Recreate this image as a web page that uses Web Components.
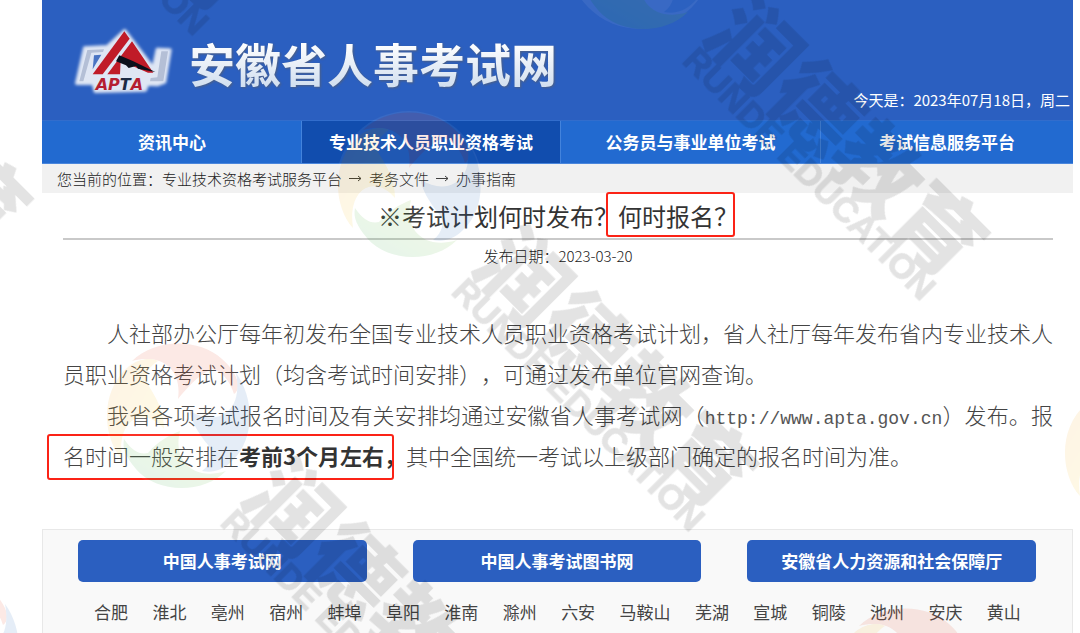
<!DOCTYPE html>
<html lang="zh-CN">
<head>
<meta charset="utf-8">
<title>安徽省人事考试网</title>
<style>
body { margin: 0; background: #fff; font-family: "Liberation Sans", "Noto Sans CJK SC", sans-serif; }
</style>
</head>
<body>
<exam-page></exam-page>

<script>
const define = (name, html) => {
  const template = document.createElement('template');
  template.innerHTML = html;
  customElements.define(name, class extends HTMLElement {
    constructor() {
      super();
      this.attachShadow({ mode: 'open' }).append(template.content.cloneNode(true));
    }
  });
};

define('apta-logo', `
<style>
  :host { display: block; }
  svg { display: block; width: 110px; height: 85px; }
</style>
<svg viewBox="0 0 330 255" role="img" aria-label="APTA">
  <defs><filter id="glow" x="-20%" y="-20%" width="140%" height="140%"><feGaussianBlur stdDeviation="4"/></filter></defs>
  <g filter="url(#glow)" fill="#dfe6f4" stroke="#dfe6f4" stroke-width="10" stroke-linejoin="round">
    <path d="M164 32 L250 145 L262 88 L300 90 L284 186 L262 194 L232 192 L226 210 L76 214 L70 190 L20 190 L44 84 L112 80 Z"/>
  </g>
  <path d="M52 90 L102 88 L99 96 L64 98 L40 184 L28 184 Z" fill="#b4bfd6"/>
  <path d="M72 106 L94 104 L68 148 Z" fill="#4a74c3"/>
  <path d="M274 94 L294 94 L280 184 L240 184 L242 174 L262 172 Z" fill="#b4bfd6"/>
  <path d="M163 34 L179 56 L98 163 L68 163 Z" fill="#c01b28"/>
  <path d="M186 64 L250 158 L234 158 L152 122 L150 163 L112 163 Z" fill="#c01b28"/>
  <path d="M148 106 L190 124 L256 156 L204 146 L198 138 L176 144 L168 136 L138 124 Z" fill="#0b101c"/>
  <text x="77" y="211" font-family="DejaVu Sans" font-weight="700" font-style="italic" font-size="48" fill="#b51d31">AP<tspan fill="#1b2a44">T</tspan>A</text>
</svg>`);

define('site-header', `
<style>
  :host { display: flex; height: 120px; background: #2b5fc0; color: #fff; }
  apta-logo { margin: 20px 0 0 28px; }
  h1 { margin: 0 0 0 9px; flex: 1; font-size: 46px; line-height: 60px; padding-top: 32px; font-weight: 700;
       font-family: "Noto Sans CJK SC", sans-serif; white-space: nowrap; }
  h1 span { background: linear-gradient(#fff 20%, #d3e0f0 85%); background-clip: text; color: transparent;
       filter: drop-shadow(1px 1px 1px #4d5f82); }
  p { margin: 0; align-self: flex-end; padding: 0 3px 9px 0; font: 15px/22px "Noto Sans CJK SC", sans-serif; white-space: nowrap; }
</style>
<apta-logo></apta-logo>
<h1><span>安徽省人事考试网</span></h1>
<p>今天是：2023年07月18日，周二</p>`);

define('site-nav', `
<style>
  :host { display: block; background: #226ad0; border-top: 1px solid #326dcc; border-bottom: 1px solid #4a86dc; }
  nav { display: grid; grid-template-columns: 259fr 259fr 260fr 253fr; }
  a { color: #fff; text-decoration: none; text-align: center; font: 700 17px/42px "Noto Sans CJK SC", sans-serif;
      border-left: 1px solid #4383dc; white-space: nowrap; }
  a:first-child { border-left-color: transparent; }
  a[aria-current] { background: #114dae; }
</style>
<nav>
  <a href="#news">资讯中心</a><a href="#pro" aria-current="page">专业技术人员职业资格考试</a><a href="#civil">公务员与事业单位考试</a><a href="#service">考试信息服务平台</a>
</nav>`);

define('bread-crumb', `
<style>
  :host { display: block; background: #f1f1f1; padding-left: 15px; font: 300 15px/29px "Noto Sans CJK SC", sans-serif; color: #222; }
  nav { display: flex; gap: 7px; white-space: nowrap; }
  a { color: inherit; text-decoration: none; }
  svg { width: 13px; height: 29px; }
</style>
<nav>
  <span>您当前的位置：<a href="#pro">专业技术资格考试服务平台</a></span>
  <svg viewBox="0 0 13 29" aria-hidden="true"><path d="M0 14.5H12M9 12L12 14.5L9 17" fill="none" stroke="#333"/></svg>
  <a href="#files">考务文件</a>
  <svg viewBox="0 0 13 29" aria-hidden="true"><path d="M0 14.5H12M9 12L12 14.5L9 17" fill="none" stroke="#333"/></svg>
  <a href="#guide">办事指南</a>
</nav>`);

define('red-mark', `
<style>
  :host { display: inline-block; position: relative; text-indent: 0; white-space: nowrap; }
  i { position: absolute; inset: var(--mark-inset); border: 2px solid #fb2316; border-radius: 3px; }
</style>
<slot></slot><i></i>`);

define('article-body', `
<style>
  :host { display: block; padding: 0 20px 0 21px; font-family: "Noto Sans CJK SC", sans-serif; text-spacing-trim: space-all; }
  h2 { margin: 0; font-weight: 400; font-size: 24px; line-height: 45px; text-align: center; color: #333;
       border-bottom: 2px solid #c9c9c9; }
  h2 red-mark { --mark-inset: -1px 3px 1px -12px; }
  .date { margin: 0; text-align: center; font-size: 15px; line-height: 32px; font-weight: 300; color: #222; }
  .text { padding: 40px 0 53px; font-weight: 300; font-size: 22px; line-height: 41px; color: #444; }
  .text p { margin: 0; text-indent: 44px; text-align: justify; }
  .text red-mark { --mark-inset: -1px 12px -4px -16px; }
  .url { font: 18px/20px "Liberation Mono", monospace; color: #555; }
  b { font-weight: 700; color: #333; }
</style>
<h2>※考试计划何时发布？<red-mark>何时报名？</red-mark></h2>
<p class="date">发布日期：2023-03-20</p>
<div class="text">
  <p>人社部办公厅每年初发布全国专业技术人员职业资格考试计划，省人社厅每年发布省内专业技术人员职业资格考试计划（均含考试时间安排），可通过发布单位官网查询。</p>
  <p>我省各项考试报名时间及有关安排均通过安徽省人事考试网（<span class="url">http://www.apta.gov.cn</span>）发布。报<red-mark>名时间一般安排在<b>考前3个月左右，</b></red-mark>其中全国统一考试以上级部门确定的报名时间为准。</p>
</div>`);

define('site-footer', `
<style>
  :host { display: block; background: #f9f9f9; border: 1px solid #e8e8e8; border-bottom: 0; padding-top: 10px;
          font-family: "Noto Sans CJK SC", sans-serif; }
  a { text-decoration: none; white-space: nowrap; }
  .sites { display: grid; grid-template-columns: repeat(3, 1fr); gap: 46px; padding: 0 36px 0 35px; }
  .sites a { background: #2b5fc0; color: #fff; text-align: center; border-radius: 5px; font-size: 17px; line-height: 42px; font-weight: 700; }
  .cities { display: flex; justify-content: space-between; padding: 15px 51px 6px; }
  .cities a { color: #444; font-size: 17px; line-height: 30px; }
</style>
<div class="sites"><a href="#cpta">中国人事考试网</a><a href="#books">中国人事考试图书网</a><a href="#hrss">安徽省人力资源和社会保障厅</a></div>
<nav class="cities">
  ${'合肥 淮北 亳州 宿州 蚌埠 阜阳 淮南 滁州 六安 马鞍山 芜湖 宣城 铜陵 池州 安庆 黄山'.split(' ').map(c => `<a href="#">${c}</a>`).join('')}
</nav>`);

const brands = [[753, 45], [522, 276], [291, 507], [26, -220], [-204, 11]];
const swirls = [[640, -44], [409, 184], [178, 415], [1136, 452], [905, 680], [-53, 646]];

define('brand-watermark', `
<style>
  :host { position: absolute; inset: 0; overflow: hidden; pointer-events: none; }
  svg { display: block; width: 100%; height: 100%; }
  .cn { font: 900 87px "Noto Sans CJK SC", sans-serif; }
  .en { font: 700 35px "Liberation Sans", sans-serif; stroke: #000; stroke-width: 1; }
</style>
<svg aria-hidden="true">
  <defs>
    <linearGradient id="warm" x1="0" y1="0" x2="1" y2="1"><stop offset="0" stop-color="#f2a33c"/><stop offset="1" stop-color="#f3e23c"/></linearGradient>
    <linearGradient id="fresh" x1="0" y1="1" x2="1" y2="0"><stop offset="0" stop-color="#35ab5c"/><stop offset="1" stop-color="#9fcb3e"/></linearGradient>
    <g id="swirl">
      <circle r="73" fill="#fff" opacity=".5"/>
      <path d="M-46 -54 C-24 -76 20 -78 44 -56 C60 -42 64 -26 56 -21 C52 -34 44 -44 34 -46 C20 -40 8 -26 0 -16 C4 -44 -14 -62 -46 -54 Z" fill="#e2543a"/>
      <path d="M-56 44 C-76 22 -78 -24 -50 -48 C-40 -56 -28 -58 -20 -54 C-32 -46 -34 -38 -30 -30 C-22 -18 -14 -4 -14 14 C-34 -10 -62 4 -56 44 Z" fill="url(#warm)"/>
      <path d="M48 56 C24 80 -22 78 -42 54 C-52 42 -56 34 -54 24 C-46 36 -38 40 -30 38 C-20 26 -8 20 2 16 C-6 48 18 66 48 56 Z" fill="url(#fresh)"/>
      <path d="M58 -42 C76 -18 78 24 54 46 C44 56 34 58 24 56 C34 48 36 38 30 30 C20 18 12 4 12 -4 C38 12 66 -2 58 -42 Z" fill="#3b78c0"/>
    </g>
    <g id="brand" transform="rotate(45)">
      <text class="cn" x="-42" y="32">润德教育</text>
      <text class="en" x="-39" y="63">RUNDE EDUCATION</text>
    </g>
  </defs>
  <g opacity=".13">${swirls.map(([x, y]) => `<use href="#swirl" x="${x}" y="${y}"/>`).join('')}</g>
  <g opacity=".11">${brands.map(([x, y]) => `<use href="#brand" x="${x}" y="${y}"/>`).join('')}</g>
</svg>`);

define('exam-page', `
<style>
  :host { display: flex; flex-direction: column; min-height: 100vh; position: relative; overflow: hidden; }
  main { display: flex; flex-direction: column; flex: 1; margin: 0 7px 0 42px; }
  site-footer { flex: 1; }
</style>
<main>
  <site-header></site-header>
  <site-nav></site-nav>
  <bread-crumb></bread-crumb>
  <article-body></article-body>
  <site-footer></site-footer>
</main>
<brand-watermark></brand-watermark>`);
</script>
</body>
</html>
